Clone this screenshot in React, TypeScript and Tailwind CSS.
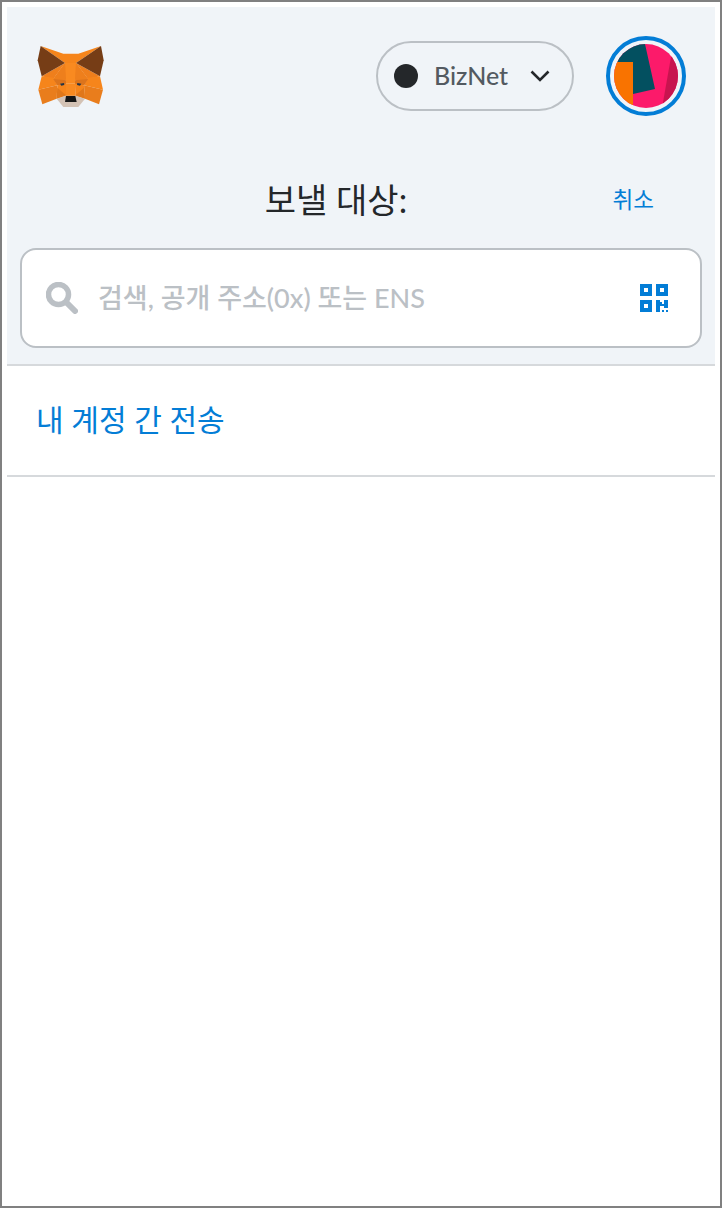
const FONT = "font-['Lato','Noto_Sans_CJK_KR',sans-serif]";

function FoxLogo() {
  return (
    <svg width="67" height="63" viewBox="111 134 201 189" className="shrink-0">
      <polygon points="122,137 190,160 235,160 303,137 228,188 264,236 160,236 195,188" fill="#f6851b" />
      <polygon points="125,228 195,188 160,236" fill="#ef7f1c" />
      <polygon points="300,228 228,188 264,236" fill="#ef7f1c" />
      <polygon points="122,137 195,188 125,228 113,180" fill="#763d16" />
      <polygon points="303,137 228,188 300,228 311,180" fill="#763d16" />
      <polygon points="195,188 228,188 225,250 198,250" fill="#f98a20" />
      <polygon points="125,228 160,232 172,255 115,268" fill="#f6851b" />
      <polygon points="300,228 264,232 252,255 309,268" fill="#f6851b" />
      <polygon points="160,236 195,188 198,240 172,255" fill="#ee7f1c" />
      <polygon points="264,236 228,188 225,240 252,255" fill="#ee7f1c" />
      <polygon points="160,236 198,240 198,252 172,255" fill="#dc741c" />
      <polygon points="264,236 225,240 225,252 252,255" fill="#dc741c" />
      <polygon points="115,268 172,255 170,295 127,312" fill="#e97d1c" />
      <polygon points="309,268 252,255 255,295 297,312" fill="#e97d1c" />
      <polygon points="172,255 198,250 198,287 170,295" fill="#f6851b" />
      <polygon points="252,255 225,250 226,287 255,295" fill="#f6851b" />
      <polygon points="198,250 225,250 226,287 198,287" fill="#f98a20" />
      <polygon points="172,262 198,285 170,295" fill="#e0771a" />
      <polygon points="252,262 226,285 255,295" fill="#e0771a" />
      <polygon points="180,250 192,248 193,254 184,256" fill="#233447" />
      <polygon points="244,250 232,248 231,254 240,256" fill="#233447" />
      <polygon points="170,295 196,286 228,286 255,295 235,320 190,320" fill="#d3c2b5" />
      <polygon points="198,287 226,287 230,305 195,305" fill="#161616" />
    </svg>
  );
}

function Avatar() {
  return (
    <div className="flex h-20 w-20 shrink-0 items-center justify-center rounded-full border-[4px] border-[#037dd6]">
      <div className="h-16 w-16 overflow-hidden rounded-full bg-[#fc1a6a]">
        <svg width="64" height="64" viewBox="0 0 64 64">
          <polygon points="0,0 31,0 41,45 19,50 19,18 0,18" fill="#035060" />
          <polygon points="0,18 19,18 19,64 0,64" fill="#f97300" />
          <polygon points="57,13 64,0 64,64 48,64" fill="#c7144f" />
        </svg>
      </div>
    </div>
  );
}

function QrIcon() {
  return (
    <svg width="29" height="29" viewBox="0 0 29 29" fill="#037dd6" className="shrink-0">
      <path fillRule="evenodd" d="M0 0h12v12H0zM4 4v4h4V4zM16 0h12v12H16zM20 4v4h4V4zM0 16h12v12H0zM4 20v4h4v-4z" />
      <path d="M16 16h4v2h2v2h2v-4h4v8h-4v-2h-4v6h-4zM22 26h2v2h-2zM26 26h2v2h-2z" />
    </svg>
  );
}

function SearchIcon() {
  return (
    <svg width="32" height="32" viewBox="0 0 32 32" fill="none" stroke="#bbc0c5" className="shrink-0">
      <circle cx="12.5" cy="12.5" r="10" strokeWidth="5.5" />
      <path d="M20.5 20.5L29 29" strokeWidth="6" strokeLinecap="round" />
    </svg>
  );
}

export default function App() {
  return (
    <div className={`h-[1208px] w-[722px] border-2 border-[#808080] bg-white pt-[5px] pr-[5px] pl-[5px] ${FONT}`}>
      <div className="flex h-[359px] flex-col border-b-2 border-[#d6d9dc] bg-[#f0f4f8]">
        <div className="flex items-center pt-[29px] pr-[29px] pl-[30px]">
          <FoxLogo />
          <div className="ml-auto flex h-[70px] w-[198px] items-center rounded-full border-2 border-[#bbc0c5] pl-4">
            <span className="h-6 w-6 rounded-full bg-[#24272a]" />
            <span className="ml-4 text-[25px] font-medium text-[#535a61]">BizNet</span>
            <svg width="20" height="12" viewBox="0 0 20 12" fill="none" stroke="#24272a" strokeWidth="2.6" className="ml-auto mr-[22px]">
              <path d="M1.5 1.5L10 10L18.5 1.5" />
            </svg>
          </div>
          <div className="ml-8">
            <Avatar />
          </div>
        </div>
        <div className="relative mt-[60px] flex h-12 items-center justify-center pr-[50px]">
          <span className="text-[34px] leading-none text-[#24272a]">보낼 대상:</span>
          <span className="absolute right-[61px] text-[22.5px] leading-none text-[#037dd6]">취소</span>
        </div>
        <div className="mt-[24px] mr-[13px] ml-[13px] flex h-[100px] items-center rounded-2xl border-2 border-[#bbc0c5] bg-white pr-[31px] pl-6">
          <SearchIcon />
          <span className="ml-5 pb-[2px] text-[27px] font-medium leading-none text-[#bbc0c5]">검색, 공개 주소(0x) 또는 ENS</span>
          <div className="ml-auto">
            <QrIcon />
          </div>
        </div>
      </div>
      <div className="flex h-[111px] items-center border-b-2 border-[#d6d9dc] pb-[4px] pl-[29px]">
        <span className="text-[30px] leading-none text-[#037dd6]">내 계정 간 전송</span>
      </div>
    </div>
  );
}
